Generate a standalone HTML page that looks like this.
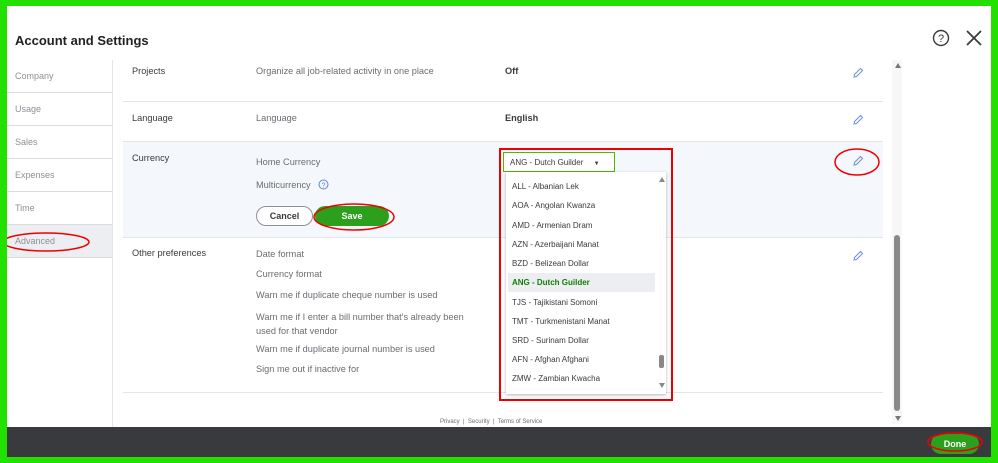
<!DOCTYPE html>
<html><head><meta charset="utf-8"><style>
*{margin:0;padding:0;box-sizing:border-box}
body{width:998px;height:463px;overflow:hidden;background:#22e000;font-family:"Liberation Sans",sans-serif;position:relative}
.a{position:absolute}
#win{left:7px;top:6px;width:984px;height:451px;background:#fff;overflow:hidden}
.t{font-size:9.2px;color:#393a3d;position:absolute;white-space:nowrap}
.g{color:#6b6c72}
.side{position:absolute;left:0;width:105px;height:33px;border-bottom:1px solid #dcdcdc;font-size:9px;color:#8d9096;padding:11px 0 0 8px}
.line{position:absolute;height:1px;background:#e3e5e8}
.opt{position:absolute;left:6px;font-size:8px;color:#393a3d}
.pen{position:absolute;width:12px;height:12px}
</style></head><body>
<div id="win" class="a">
<div class="a" style="left:8px;top:27px;font-size:13px;font-weight:bold;color:#222">Account and Settings</div>
<svg class="a" style="left:925px;top:23px" width="18" height="18" viewBox="0 0 18 18"><circle cx="9" cy="9" r="7.5" fill="none" stroke="#393a3d" stroke-width="1.4"/><text x="9" y="13" font-size="11" text-anchor="middle" fill="#393a3d" font-family="Liberation Sans">?</text></svg>
<svg class="a" style="left:958px;top:23px" width="18" height="18" viewBox="0 0 18 18"><path d="M2 2L16 16M16 2L2 16" stroke="#393a3d" stroke-width="1.8"/></svg>
<div class="a" style="left:0;top:54px;width:106px;height:370px;border-right:1px solid #e3e5e8"></div>
<div class="side" style="top:54px">Company</div>
<div class="side" style="top:87px">Usage</div>
<div class="side" style="top:120px">Sales</div>
<div class="side" style="top:153px">Expenses</div>
<div class="side" style="top:186px">Time</div>
<div class="side" style="top:219px;background:#eceef1">Advanced</div>
<svg class="a" style="left:-6px;top:224px" width="92" height="24"><ellipse cx="45" cy="12" rx="43" ry="9" fill="none" stroke="#e00" stroke-width="1.5"/></svg>
<div class="t" style="left:125px;top:60px">Projects</div>
<div class="t g" style="left:249px;top:60px">Organize all job-related activity in one place</div>
<div class="t" style="left:498px;top:60px;font-weight:bold">Off</div>
<div class="line" style="left:116px;top:95px;width:760px"></div>
<div class="t" style="left:125px;top:107px">Language</div>
<div class="t g" style="left:249px;top:107px">Language</div>
<div class="t" style="left:498px;top:107px;font-weight:bold">English</div>
<div class="a" style="left:116px;top:135px;width:760px;height:97px;background:#f4f7fc;border-top:1px solid #e3e5e8;border-bottom:1px solid #e3e5e8"></div>
<div class="t" style="left:125px;top:147px">Currency</div>
<div class="t g" style="left:249px;top:151px">Home Currency</div>
<div class="t g" style="left:249px;top:174px">Multicurrency</div>
<svg class="a" style="left:311px;top:173px" width="11" height="11"><circle cx="5.5" cy="5.5" r="4.5" fill="none" stroke="#5a8ad0"/><text x="5.5" y="8.5" font-size="7" text-anchor="middle" fill="#5a8ad0">?</text></svg>
<div class="a" style="left:249px;top:200px;width:57px;height:20px;border:1px solid #8d9096;border-radius:10px;font-size:9px;font-weight:bold;color:#393a3d;text-align:center;line-height:18px;background:#fff">Cancel</div>
<div class="a" style="left:308px;top:200px;width:74px;height:20px;border-radius:10px;background:#2ca01c;font-size:9px;font-weight:bold;color:#fff;text-align:center;line-height:20px">Save</div>
<svg class="a" style="left:305px;top:195px" width="84" height="32"><ellipse cx="42" cy="16" rx="40" ry="13" fill="none" stroke="#e00" stroke-width="1.5"/></svg>
<div class="t" style="left:125px;top:242px">Other preferences</div>
<div class="t g" style="left:249px;top:243px">Date format</div>
<div class="t g" style="left:249px;top:263px">Currency format</div>
<div class="t g" style="left:249px;top:284px">Warn me if duplicate cheque number is used</div>
<div class="t g" style="left:249px;top:304px;line-height:14px">Warn me if I enter a bill number that's already been<br>used for that vendor</div>
<div class="t g" style="left:249px;top:338px">Warn me if duplicate journal number is used</div>
<div class="t g" style="left:249px;top:358px">Sign me out if inactive for</div>
<div class="line" style="left:116px;top:386px;width:760px"></div>
<div class="a" style="left:433px;top:413px;font-size:6px;color:#6b6c72">Privacy &nbsp;|&nbsp; Security &nbsp;|&nbsp; Terms of Service</div>
<svg class="pen" style="left:845px;top:61px" viewBox="0 0 12 12"><path d="M2 10L2.5 7.5 8.5 1.5 10.5 3.5 4.5 9.5Z" fill="none" stroke="#6b8ed6" stroke-width="1"/></svg>
<svg class="pen" style="left:845px;top:108px" viewBox="0 0 12 12"><path d="M2 10L2.5 7.5 8.5 1.5 10.5 3.5 4.5 9.5Z" fill="none" stroke="#6b8ed6" stroke-width="1"/></svg>
<svg class="pen" style="left:845px;top:149px" viewBox="0 0 12 12"><path d="M2 10L2.5 7.5 8.5 1.5 10.5 3.5 4.5 9.5Z" fill="none" stroke="#6b8ed6" stroke-width="1"/></svg>
<svg class="pen" style="left:845px;top:244px" viewBox="0 0 12 12"><path d="M2 10L2.5 7.5 8.5 1.5 10.5 3.5 4.5 9.5Z" fill="none" stroke="#6b8ed6" stroke-width="1"/></svg>
<svg class="a" style="left:826px;top:140px" width="48" height="32"><ellipse cx="24" cy="16" rx="22" ry="13" fill="none" stroke="#e00" stroke-width="1.5"/></svg>
<div class="a" style="left:885px;top:54px;width:10px;height:364px;background:#f7f7f7"></div>
<div class="a" style="left:888px;top:57px;width:0;height:0;border-left:3px solid transparent;border-right:3px solid transparent;border-bottom:5px solid #777"></div>
<div class="a" style="left:887px;top:229px;width:6px;height:176px;background:#8a8a8a;border-radius:3px"></div>
<div class="a" style="left:888px;top:410px;width:0;height:0;border-left:3px solid transparent;border-right:3px solid transparent;border-top:5px solid #777"></div>
<div class="a" style="left:492px;top:142px;width:174px;height:253px;border:2px solid #e00"></div>
<div class="a" style="left:496px;top:146px;width:112px;height:20px;border:1px solid #53b700;background:#fff;font-size:8px;color:#393a3d;padding:5px 0 0 6px">ANG - Dutch Guilder <span style="margin-left:8px;font-size:6px">▼</span></div>
<div class="a" style="left:499px;top:166px;width:160px;height:222px;background:#fff;box-shadow:0 1px 3px rgba(0,0,0,.3)">
<div class="opt" style="top:10px">ALL - Albanian Lek</div>
<div class="opt" style="top:29px">AOA - Angolan Kwanza</div>
<div class="opt" style="top:49px">AMD - Armenian Dram</div>
<div class="opt" style="top:68px">AZN - Azerbaijani Manat</div>
<div class="opt" style="top:87px">BZD - Belizean Dollar</div>
<div class="a" style="left:2px;top:101px;width:147px;height:19px;background:#eceef1"></div>
<div class="opt" style="top:106px;color:#108000;font-weight:bold">ANG - Dutch Guilder</div>
<div class="opt" style="top:126px">TJS - Tajikistani Somoni</div>
<div class="opt" style="top:145px">TMT - Turkmenistani Manat</div>
<div class="opt" style="top:164px">SRD - Surinam Dollar</div>
<div class="opt" style="top:183px">AFN - Afghan Afghani</div>
<div class="opt" style="top:202px">ZMW - Zambian Kwacha</div>
<div class="a" style="left:153px;top:5px;width:0;height:0;border-left:3px solid transparent;border-right:3px solid transparent;border-bottom:5px solid #888"></div>
<div class="a" style="left:153px;top:183px;width:5px;height:13px;background:#888;border-radius:2px"></div>
<div class="a" style="left:153px;top:211px;width:0;height:0;border-left:3px solid transparent;border-right:3px solid transparent;border-top:5px solid #888"></div>
</div>
<div class="a" style="left:0;top:421px;width:984px;height:30px;background:#393a3d"></div>
<div class="a" style="left:924px;top:428px;width:48px;height:20px;border-radius:10px;background:#2ca01c;color:#fff;font-size:9px;font-weight:bold;text-align:center;line-height:20px">Done</div>
<svg class="a" style="left:919px;top:424px" width="58" height="24"><ellipse cx="29" cy="12" rx="27" ry="9" fill="none" stroke="#e00" stroke-width="1.5"/></svg>
</div>
</body></html>
